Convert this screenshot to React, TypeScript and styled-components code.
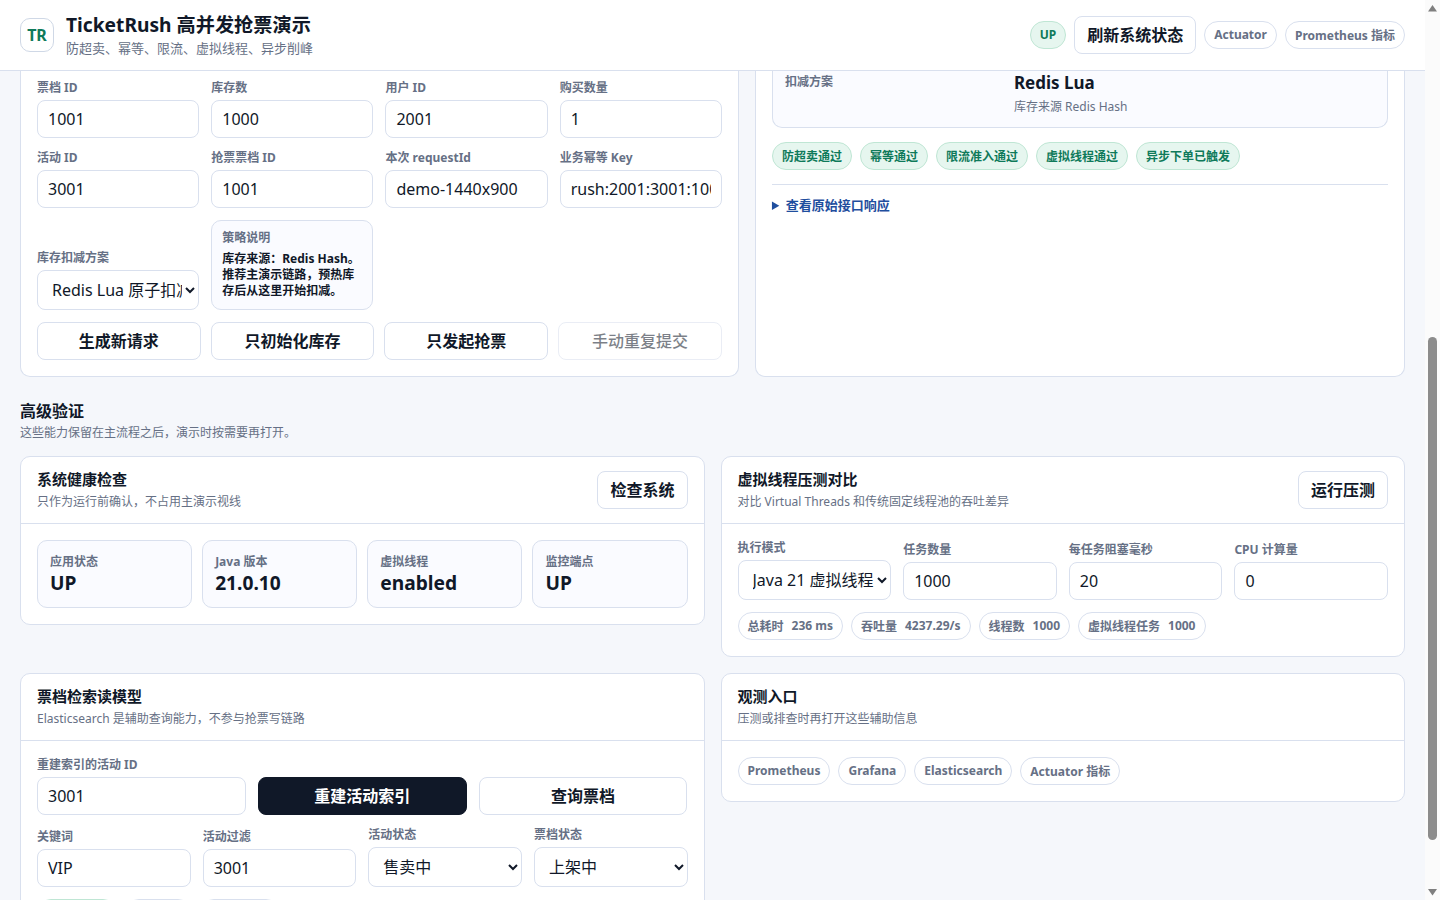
import React from "react";
import styled, { createGlobalStyle, css } from "styled-components";

const border = "#d9e0ee";
const ink = "#101828";
const muted = "#667085";
const soft = "#fafbff";

const Global = createGlobalStyle`
  * { box-sizing: border-box; }
  html, body { height: 100%; overflow: hidden; }
  body {
    margin: 0;
    background: #f5f7fb;
    color: ${ink};
    font-family: "Noto Sans", "Noto Sans CJK SC", sans-serif;
  }
  input, select, button { font-family: inherit; }
`;

const Shell = styled.div`
  display: flex;
  height: 100vh;
`;
const Page = styled.div`
  flex: 1;
  min-width: 0;
  display: flex;
  flex-direction: column;
  overflow: hidden;
`;
const ScrollBar = styled.div`
  flex: none;
  width: 15px;
  display: flex;
  flex-direction: column;
  background: #fbfbfb;
`;
const ScrollTrack = styled.div`
  flex: 1;
  display: flex;
  justify-content: center;
  padding-top: 322px;
`;
const ScrollThumb = styled.div`
  width: 9px;
  height: 503px;
  border-radius: 5px;
  background: #8c8c8c;
`;

const Header = styled.header`
  flex: none;
  height: 71px;
  padding: 0 20px;
  display: flex;
  align-items: center;
  justify-content: space-between;
  background: #fff;
  border-bottom: 1px solid ${border};
`;
const Brand = styled.div`
  display: flex;
  align-items: center;
  gap: 12px;
`;
const Logo = styled.div`
  width: 34px;
  height: 34px;
  border-radius: 10px;
  border: 1px solid #cfd8e6;
  display: flex;
  align-items: center;
  justify-content: center;
  font-size: 16px;
  font-weight: 700;
  color: #0f7a5a;
`;
const BrandTitle = styled.h1`
  margin: 0;
  font-size: 19.2px;
  line-height: 24px;
  font-weight: 700;
`;
const BrandSub = styled.p`
  margin: 2px 0 0;
  font-size: 13px;
  line-height: 18px;
  color: ${muted};
`;
const HeaderActions = styled.div`
  display: flex;
  align-items: center;
  gap: 8px;
`;

const Main = styled.main`
  flex: 1;
  min-height: 0;
  overflow: hidden;
  padding: 0 20px;
`;
const SectionHead = styled.div`
  margin: 22px 0 16px;
`;
const SectionTitle = styled.h2`
  margin: 0;
  font-size: 16px;
  line-height: 24px;
  font-weight: 700;
`;
const SectionDesc = styled.p`
  margin: 2px 0 -1px;
  font-size: 12px;
  line-height: 16px;
  color: ${muted};
`;

const Panel = styled.section<{ $cut?: boolean }>`
  background: #fff;
  border: 1px solid ${border};
  border-radius: 10px;
  min-width: 0;
  ${(p) =>
    p.$cut &&
    css`
      border-top: 0;
      border-radius: 0 0 10px 10px;
    `}
`;
const PanelHead = styled.div`
  height: 67px;
  padding: 0 16px;
  display: flex;
  align-items: center;
  justify-content: space-between;
  border-bottom: 1px solid ${border};
`;
const PanelHeadText = styled.div`
  padding-bottom: 2px;
`;
const PanelTitle = styled.h3`
  margin: 0;
  font-size: 15px;
  line-height: 20px;
  font-weight: 700;
`;
const PanelDesc = styled.p`
  margin: 5px 0 0;
  font-size: 12px;
  line-height: 16px;
  color: ${muted};
`;
const PanelBody = styled.div<{ $top?: number }>`
  padding: ${(p) => p.$top ?? 16}px 16px 16px;
`;

const FlowGrid = styled.div`
  display: grid;
  grid-template-columns: minmax(0, 1.106fr) minmax(0, 1fr);
  gap: 16px;
`;
const AdvancedGrid = styled.div`
  display: grid;
  grid-template-columns: minmax(0, 1fr) minmax(0, 1fr);
  gap: 16px;
  align-items: start;
`;

const FieldGrid = styled.div`
  display: grid;
  grid-template-columns: repeat(4, minmax(0, 1fr));
  gap: 12px;
  align-items: end;
`;
const Field = styled.label`
  display: flex;
  flex-direction: column;
  gap: 4px;
  min-width: 0;
`;
const FieldLabel = styled.span`
  display: block;
  font-size: 12px;
  line-height: 16px;
  font-weight: 700;
  color: ${muted};
`;
const TextInput = styled.input`
  width: 100%;
  height: 38px;
  padding: 0 10px;
  border: 1px solid ${border};
  border-radius: 8px;
  background: #fff;
  color: ${ink};
  font-size: 16px;
`;
const Select = styled.select`
  width: 100%;
  height: 40px;
  padding: 0 0 0 10px;
  border: 1px solid ${border};
  border-radius: 8px;
  background: #fff;
  color: ${ink};
  font-size: 16px;
`;
const Note = styled.div`
  height: 90px;
  padding: 9px 10px;
  border: 1px solid ${border};
  border-radius: 10px;
  background: ${soft};
`;
const NoteText = styled.p`
  margin: 5px 0 0;
  font-size: 12px;
  line-height: 16px;
  font-weight: 700;
  color: ${ink};
`;

const ActionRow = styled.div`
  margin-top: 12px;
  display: grid;
  grid-template-columns: repeat(4, minmax(0, 1fr));
  gap: 10px;
`;
const Button = styled.button<{ $primary?: boolean }>`
  height: 38px;
  padding: 0 12px 2px;
  border: 1px solid ${border};
  border-radius: 8px;
  background: #fff;
  color: ${ink};
  font-size: 16px;
  font-weight: 700;
  white-space: nowrap;
  ${(p) =>
    p.$primary &&
    css`
      background: ${ink};
      border-color: ${ink};
      color: #fff;
    `}
  &:disabled {
    opacity: 0.55;
    color: ${ink};
    font-weight: 500;
  }
`;

const Pill = styled.span<{ $ok?: boolean; $w?: number }>`
  display: inline-flex;
  align-items: center;
  gap: 8px;
  height: 28px;
  padding: 0 9px 1px;
  border-radius: 14px;
  border: 1px solid ${(p) => (p.$ok ? "#bfe6d4" : border)};
  background: ${(p) => (p.$ok ? "#e6f6ef" : "#fff")};
  color: ${(p) => (p.$ok ? "#0f7a5a" : muted)};
  font-size: 12px;
  font-weight: 700;
  white-space: nowrap;
  ${(p) => (p.$w ? `width: ${p.$w}px;` : "")}
`;
const PillRow = styled.div<{ $top?: number }>`
  display: flex;
  flex-wrap: wrap;
  gap: 8px;
  margin-top: ${(p) => p.$top ?? 0}px;
`;

const ResultCard = styled.div`
  padding: 1px 12px 12px;
  border: 1px solid ${border};
  border-top: 0;
  border-radius: 0 0 10px 10px;
  background: ${soft};
  display: grid;
  grid-template-columns: 229px minmax(0, 1fr);
`;
const ResultLabel = styled.span`
  margin-top: 2px;
  font-size: 12px;
  line-height: 16px;
  font-weight: 700;
  color: ${muted};
`;
const ResultValue = styled.div`
  font-size: 17px;
  line-height: 22px;
  font-weight: 700;
`;
const ResultSub = styled.div`
  margin-top: 5px;
  font-size: 12px;
  line-height: 16px;
  font-weight: 400;
  color: ${muted};
`;
const RawDetails = styled.details`
  margin-top: 14px;
  padding-top: 12px;
  border-top: 1px solid ${border};
  font-size: 13px;
  line-height: 16px;
  font-weight: 700;
  color: #1f4e9e;
`;
const RawSummary = styled.summary`
  cursor: pointer;
`;

const StatGrid = styled.div`
  display: grid;
  grid-template-columns: repeat(4, minmax(0, 1fr));
  gap: 10px;
`;
const Stat = styled.div`
  height: 68px;
  padding: 13px 12px 0;
  border: 1px solid ${border};
  border-radius: 10px;
  background: ${soft};
`;
const StatLabel = styled.div`
  font-size: 12px;
  line-height: 16px;
  font-weight: 700;
  color: ${muted};
`;
const StatValue = styled.div`
  font-size: 19.2px;
  line-height: 26px;
  font-weight: 700;
`;

const SearchTop = styled.div`
  display: grid;
  grid-template-columns: repeat(3, minmax(0, 1fr));
  gap: 12px;
  align-items: end;
  margin-bottom: 12px;
`;

function Arrow({ up }: { up?: boolean }) {
  return (
    <svg width="15" height="15" viewBox="0 0 15 15" aria-hidden="true">
      <path d={up ? "M7.5 5 L12 11.5 L3 11.5 Z" : "M3 4 L12 4 L7.5 10.5 Z"} fill="#7f7f7f" />
    </svg>
  );
}
function Text({ label, value }: { label: string; value: string }) {
  return (
    <Field>
      <FieldLabel>{label}</FieldLabel>
      <TextInput defaultValue={value} />
    </Field>
  );
}
function Choice({ label, options }: { label: string; options: string[] }) {
  return (
    <Field>
      <FieldLabel>{label}</FieldLabel>
      <Select defaultValue={options[0]}>
        {options.map((o) => (
          <option key={o}>{o}</option>
        ))}
      </Select>
    </Field>
  );
}
function Head({ title, desc, action }: { title: string; desc: string; action?: string }) {
  return (
    <PanelHead>
      <PanelHeadText>
        <PanelTitle>{title}</PanelTitle>
        <PanelDesc>{desc}</PanelDesc>
      </PanelHeadText>
      {action && <Button>{action}</Button>}
    </PanelHead>
  );
}

export default function App() {
  return (
    <Shell>
      <Global />
      <Page>
        <Header>
          <Brand>
            <Logo>TR</Logo>
            <div>
              <BrandTitle>TicketRush 高并发抢票演示</BrandTitle>
              <BrandSub>防超卖、幂等、限流、虚拟线程、异步削峰</BrandSub>
            </div>
          </Brand>
          <HeaderActions>
            <Pill $ok>UP</Pill>
            <Button>刷新系统状态</Button>
            <Pill>Actuator</Pill>
            <Pill>Prometheus 指标</Pill>
          </HeaderActions>
        </Header>
        <Main>
          <FlowGrid>
            <Panel $cut>
              <PanelBody $top={9}>
                <FieldGrid>
                  <Text label="票档 ID" value="1001" />
                  <Text label="库存数" value="1000" />
                  <Text label="用户 ID" value="2001" />
                  <Text label="购买数量" value="1" />
                  <Text label="活动 ID" value="3001" />
                  <Text label="抢票票档 ID" value="1001" />
                  <Text label="本次 requestId" value="demo-1440x900" />
                  <Text label="业务幂等 Key" value="rush:2001:3001:1001:demo-1440x900" />
                  <Choice label="库存扣减方案" options={["Redis Lua 原子扣减"]} />
                  <Note>
                    <FieldLabel>策略说明</FieldLabel>
                    <NoteText>库存来源：Redis Hash。推荐主演示链路，预热库存后从这里开始扣减。</NoteText>
                  </Note>
                </FieldGrid>
                <ActionRow>
                  <Button>生成新请求</Button>
                  <Button>只初始化库存</Button>
                  <Button>只发起抢票</Button>
                  <Button disabled>手动重复提交</Button>
                </ActionRow>
              </PanelBody>
            </Panel>
            <Panel $cut>
              <PanelBody $top={0}>
                <ResultCard>
                  <ResultLabel>扣减方案</ResultLabel>
                  <ResultValue>
                    Redis Lua
                    <ResultSub>库存来源 Redis Hash</ResultSub>
                  </ResultValue>
                </ResultCard>
                <PillRow $top={14}>
                  <Pill $ok>防超卖通过</Pill>
                  <Pill $ok>幂等通过</Pill>
                  <Pill $ok>限流准入通过</Pill>
                  <Pill $ok>虚拟线程通过</Pill>
                  <Pill $ok>异步下单已触发</Pill>
                </PillRow>
                <RawDetails>
                  <RawSummary>查看原始接口响应</RawSummary>
                </RawDetails>
              </PanelBody>
            </Panel>
          </FlowGrid>
          <SectionHead>
            <SectionTitle>高级验证</SectionTitle>
            <SectionDesc>这些能力保留在主流程之后，演示时按需要再打开。</SectionDesc>
          </SectionHead>
          <AdvancedGrid>
            <Panel>
              <Head title="系统健康检查" desc="只作为运行前确认，不占用主演示视线" action="检查系统" />
              <PanelBody>
                <StatGrid>
                  <Stat>
                    <StatLabel>应用状态</StatLabel>
                    <StatValue>UP</StatValue>
                  </Stat>
                  <Stat>
                    <StatLabel>Java 版本</StatLabel>
                    <StatValue>21.0.10</StatValue>
                  </Stat>
                  <Stat>
                    <StatLabel>虚拟线程</StatLabel>
                    <StatValue>enabled</StatValue>
                  </Stat>
                  <Stat>
                    <StatLabel>监控端点</StatLabel>
                    <StatValue>UP</StatValue>
                  </Stat>
                </StatGrid>
              </PanelBody>
            </Panel>
            <Panel>
              <Head title="虚拟线程压测对比" desc="对比 Virtual Threads 和传统固定线程池的吞吐差异" action="运行压测" />
              <PanelBody>
                <FieldGrid>
                  <Choice label="执行模式" options={["Java 21 虚拟线程"]} />
                  <Text label="任务数量" value="1000" />
                  <Text label="每任务阻塞毫秒" value="20" />
                  <Text label="CPU 计算量" value="0" />
                </FieldGrid>
                <PillRow $top={12}>
                  <Pill>总耗时 <span>236 ms</span></Pill>
                  <Pill>吞吐量 <span>4237.29/s</span></Pill>
                  <Pill>线程数 <span>1000</span></Pill>
                  <Pill>虚拟线程任务 <span>1000</span></Pill>
                </PillRow>
              </PanelBody>
            </Panel>
            <Panel>
              <Head title="票档检索读模型" desc="Elasticsearch 是辅助查询能力，不参与抢票写链路" />
              <PanelBody>
                <SearchTop>
                  <Text label="重建索引的活动 ID" value="3001" />
                  <Button $primary>重建活动索引</Button>
                  <Button>查询票档</Button>
                </SearchTop>
                <FieldGrid>
                  <Text label="关键词" value="VIP" />
                  <Text label="活动过滤" value="3001" />
                  <Choice label="活动状态" options={["售卖中"]} />
                  <Choice label="票档状态" options={["上架中"]} />
                </FieldGrid>
                <PillRow $top={12}>
                  <Pill $ok $w={80} />
                  <Pill $w={67} />
                  <Pill $w={80} />
                </PillRow>
              </PanelBody>
            </Panel>
            <Panel>
              <Head title="观测入口" desc="压测或排查时再打开这些辅助信息" />
              <PanelBody>
                <PillRow>
                  <Pill>Prometheus</Pill>
                  <Pill>Grafana</Pill>
                  <Pill>Elasticsearch</Pill>
                  <Pill>Actuator 指标</Pill>
                </PillRow>
              </PanelBody>
            </Panel>
          </AdvancedGrid>
        </Main>
      </Page>
      <ScrollBar>
        <Arrow up />
        <ScrollTrack>
          <ScrollThumb />
        </ScrollTrack>
        <Arrow />
      </ScrollBar>
    </Shell>
  );
}
